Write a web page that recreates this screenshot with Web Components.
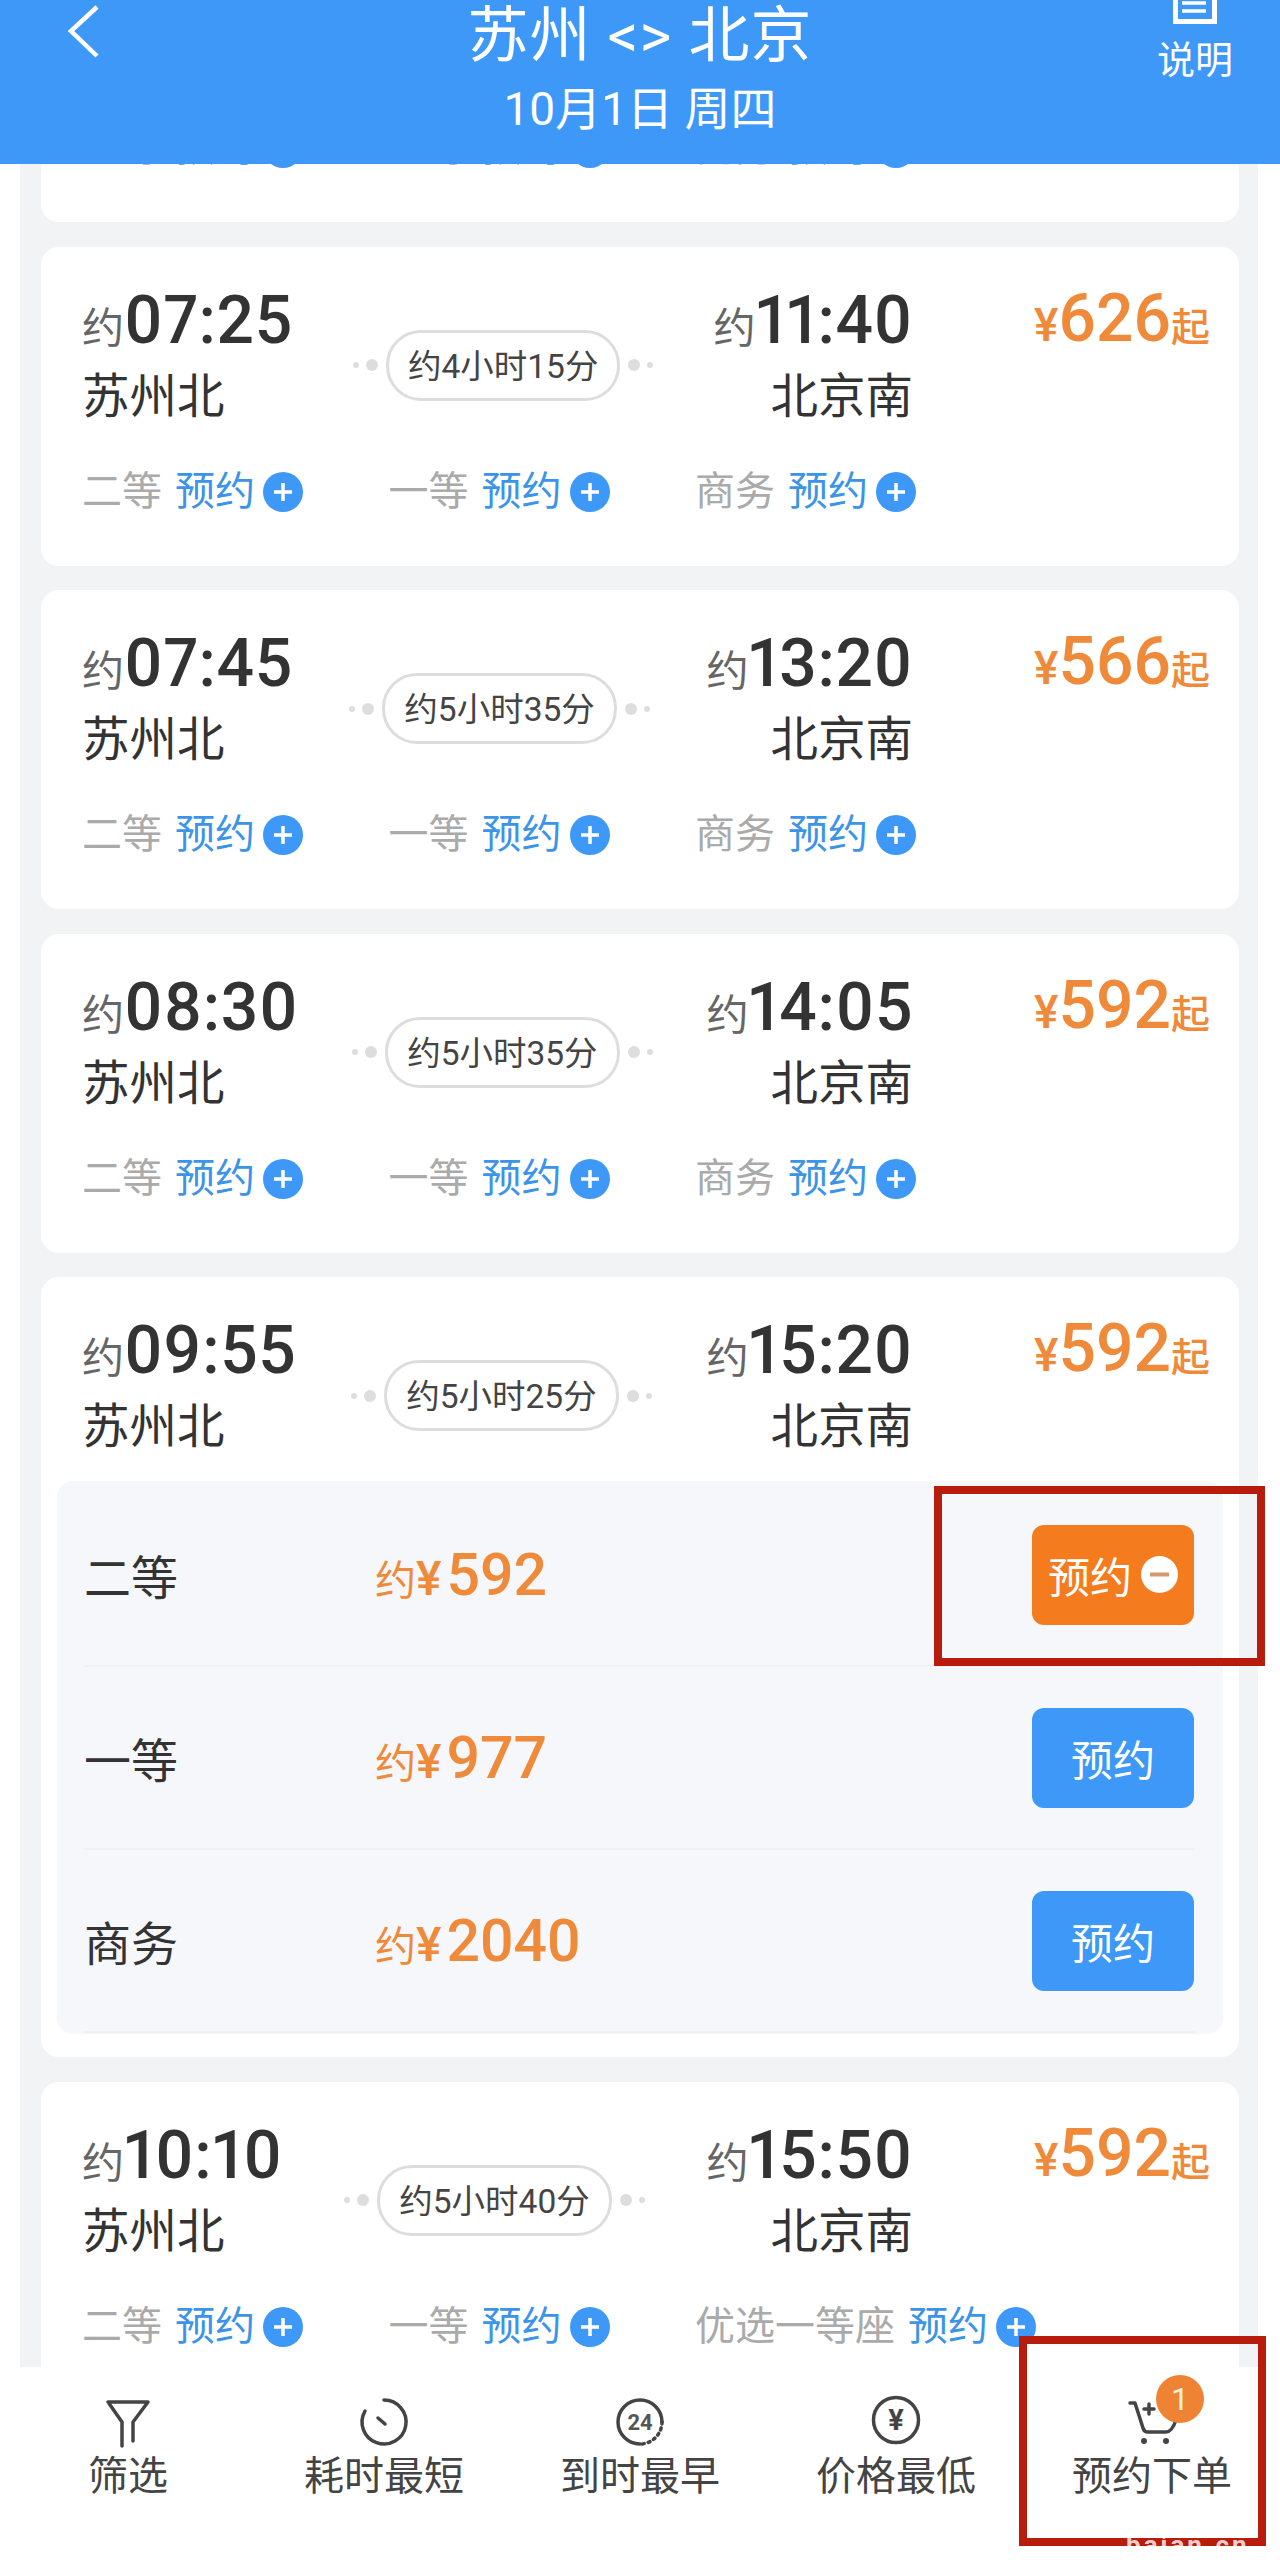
<!DOCTYPE html>
<html lang="zh-CN">
<head>
<meta charset="utf-8">
<title>苏州 北京</title>
<style>
  body { margin: 0; background: #fff; font-family: Roboto, "Noto Sans CJK SC", sans-serif; }
</style>
</head>
<body>
<ticket-page>
  <top-bar slot="top">
    苏州 &lt;&gt; 北京
    <span slot="sub">10月1日 周四</span>
    <span slot="side">说明</span>
  </top-bar>

  <train-card>
    <seat-list>
      <seat-tag>二等</seat-tag><seat-tag>一等</seat-tag><seat-tag>商务</seat-tag>
    </seat-list>
  </train-card>
  <train-card dep="07:25" arr="11:40" dur="4小时15分" price="626">
    <seat-list>
      <seat-tag>二等</seat-tag><seat-tag>一等</seat-tag><seat-tag>商务</seat-tag>
    </seat-list>
  </train-card>
  <train-card dep="07:45" arr="13:20" dur="5小时35分" price="566">
    <seat-list>
      <seat-tag>二等</seat-tag><seat-tag>一等</seat-tag><seat-tag>商务</seat-tag>
    </seat-list>
  </train-card>
  <train-card dep="08:30" arr="14:05" dur="5小时35分" price="592">
    <seat-list>
      <seat-tag>二等</seat-tag><seat-tag>一等</seat-tag><seat-tag>商务</seat-tag>
    </seat-list>
  </train-card>
  <train-card dep="09:55" arr="15:20" dur="5小时25分" price="592" open>
    <fare-panel>
      <fare-row price="592" picked>二等</fare-row>
      <fare-row price="977">一等</fare-row>
      <fare-row price="2040">商务</fare-row>
    </fare-panel>
  </train-card>
  <train-card dep="10:10" arr="15:50" dur="5小时40分" price="592">
    <seat-list>
      <seat-tag>二等</seat-tag><seat-tag>一等</seat-tag><seat-tag>优选一等座</seat-tag>
    </seat-list>
  </train-card>

  <bottom-tabs slot="bottom">
    <tab-item icon="funnel">筛选</tab-item>
    <tab-item icon="clock">耗时最短</tab-item>
    <tab-item icon="day">到时最早</tab-item>
    <tab-item icon="yen">价格最低</tab-item>
    <tab-item icon="cart" badge="1">预约下单</tab-item>
  </bottom-tabs>

  <mark-box slot="over" style="--x:934px;--y:1486px;--w:331px;--h:180px"></mark-box>
  <mark-box slot="over" style="--x:1019px;--y:2336px;--w:247px;--h:210px"></mark-box>
  <water-mark slot="over">baian.cn</water-mark>
</ticket-page>

<script>
// page shell: header, clipped list, footer
class TicketPage extends HTMLElement {
  constructor() {
    super();
    this.attachShadow({ mode: 'open' });
    this.shadowRoot.innerHTML = `
      <style>
        :host { display: flex; flex-direction: column; position: relative; width: 1280px; height: 2565px; overflow: hidden; background: #fff; color: #333; }
        .list { flex: 1; min-height: 0; overflow: hidden; margin: 0 22px 0 20px; padding: 0 19px 0 21px; background: #f2f3f5; }
        .inner { display: flex; flex-direction: column; gap: 24.5px; margin-top: -77px; }
      </style>
      <slot name="top"></slot>
      <div class="list"><div class="inner"><slot></slot></div></div>
      <slot name="bottom"></slot>
      <slot name="over"></slot>`;
  }
}

class TopBar extends HTMLElement {
  constructor() {
    super();
    this.attachShadow({ mode: 'open' });
    this.shadowRoot.innerHTML = `
      <style>
        :host { display: grid; grid-template-columns: 1fr auto 1fr; flex: none; position: relative; z-index: 2; height: 164px; background: #3d98f7; color: #fff; overflow: hidden; }
        .back { margin: 4px 0 0 66px; display: block; }
        .mid { text-align: center; }
        .title { font-size: 61px; line-height: 72px; letter-spacing: 1px; white-space: nowrap; }
        .sub { font-size: 46px; line-height: 72px; margin-top: 1px; white-space: nowrap; }
        .side { justify-self: end; width: 76px; margin-right: 47px; display: flex; flex-direction: column; align-items: center; font-size: 38px; line-height: 46px; white-space: nowrap; }
        .side svg { display: block; margin-bottom: 13px; }
      </style>
      <svg class="back" width="36" height="56" viewBox="0 0 36 56" fill="none" stroke="#fff" stroke-width="4.5">
        <path d="M31 3 L5 27 L31 52"/>
      </svg>
      <div class="mid">
        <div class="title"><slot></slot></div>
        <div class="sub"><slot name="sub"></slot></div>
      </div>
      <div class="side">
        <svg width="44" height="24" viewBox="0 0 44 24" fill="none" stroke="#fff" stroke-width="5">
          <rect x="2.5" y="-20" width="39" height="41.5"/>
          <path d="M9 3 H33 M9 11 H33" stroke-width="3.5"/>
        </svg>
        <slot name="side"></slot>
      </div>`;
  }
}

const cardTemplate = document.createElement('template');
cardTemplate.innerHTML = `
  <style>
    :host { display: block; flex: none; background: #fff; border-radius: 18px; padding-bottom: 54px; }
    :host([open]) { padding-bottom: 23px; }
    .head { display: flex; height: 148px; padding: 36px 29px 0 41px; color: #333; }
    .end { white-space: nowrap; }
    .end.right { text-align: right; }
    .time { font-size: 66px; line-height: 76px; font-weight: 500; letter-spacing: .6px; font-feature-settings: "pnum"; }
    .yue { font-size: 42px; font-weight: 400; color: #666; letter-spacing: 0; }
    .station { font-size: 47.5px; line-height: 60px; }
    .mid { flex: 1; display: flex; align-items: center; justify-content: center; gap: 8px; padding-top: 17px; }
    .dots { display: flex; align-items: center; gap: 7px; }
    .dots i { display: block; width: 12px; height: 12px; border-radius: 50%; background: #ddd; }
    .dots i.tiny { width: 6px; height: 6px; }
    .pill { box-sizing: border-box; height: 71px; padding: 0 19px 4px; display: flex; align-items: center; border: 3px solid #ddd; border-radius: 35px; font-size: 33.5px; color: #444; white-space: nowrap; background: #fff; }
    .price { width: 297px; margin-top: -2px; text-align: right; color: #ee8a3a; font-size: 66px; line-height: 76px; font-weight: 500; white-space: nowrap; }
    .price .cur { font-size: 46px; }
    .price .from { font-size: 39px; }
    .body { margin-top: 41px; }
    :host([open]) .body { margin-top: 20px; }
    .head[hidden] { display: none; }
  </style>
  <div class="head">
    <div class="end">
      <div class="time"><span class="yue">约</span><span class="dep"></span></div>
      <div class="station">苏州北</div>
    </div>
    <div class="mid">
      <div class="dots"><i class="tiny"></i><i></i></div>
      <div class="pill"></div>
      <div class="dots"><i></i><i class="tiny"></i></div>
    </div>
    <div class="end right">
      <div class="time"><span class="yue">约</span><span class="arr"></span></div>
      <div class="station">北京南</div>
    </div>
    <div class="price"><span class="cur">¥</span><span class="amount"></span><span class="from">起</span></div>
  </div>
  <div class="body"><slot></slot></div>`;

class TrainCard extends HTMLElement {
  constructor() {
    super();
    this.attachShadow({ mode: 'open' });
    this.shadowRoot.appendChild(cardTemplate.content.cloneNode(true));
  }
  connectedCallback() {
    const root = this.shadowRoot;
    if (!this.hasAttribute('dep')) {
      root.querySelector('.head').hidden = true;
      return;
    }
    root.querySelector('.dep').textContent = this.getAttribute('dep');
    root.querySelector('.arr').textContent = this.getAttribute('arr');
    root.querySelector('.pill').textContent = '约' + this.getAttribute('dur');
    root.querySelector('.amount').textContent = this.getAttribute('price');
  }
}

class SeatList extends HTMLElement {
  constructor() {
    super();
    this.attachShadow({ mode: 'open' });
    this.shadowRoot.innerHTML = `
      <style>
        :host { display: grid; grid-template-columns: 306.5px 306.5px 1fr; height: 40px; padding-left: 41px; }
      </style>
      <slot></slot>`;
  }
}

class SeatTag extends HTMLElement {
  constructor() {
    super();
    this.attachShadow({ mode: 'open' });
    this.shadowRoot.innerHTML = `
      <style>
        :host { display: flex; align-items: center; font-size: 40px; line-height: 40px; color: #aaa; white-space: nowrap; }
        .book { color: #3b94e8; margin: 0 8px 0 13px; }
        svg { display: block; flex: none; }
      </style>
      <slot></slot><span class="book">预约</span>
      <svg width="40" height="40" viewBox="0 0 40 40">
        <circle cx="20" cy="20" r="20" fill="#3d98f7"/>
        <path d="M20 11 V29 M11 20 H29" stroke="#fff" stroke-width="3.5"/>
      </svg>`;
  }
}

class FarePanel extends HTMLElement {
  constructor() {
    super();
    this.attachShadow({ mode: 'open' });
    this.shadowRoot.innerHTML = `
      <style>
        :host { display: block; margin: 0 16px; padding: 3px 28px 1px 27px; border-radius: 16px; background: #f6f7fb; }
      </style>
      <slot></slot>`;
  }
}

class FareRow extends HTMLElement {
  constructor() {
    super();
    this.attachShadow({ mode: 'open' });
    this.shadowRoot.innerHTML = `
      <style>
        :host { display: flex; align-items: center; box-sizing: border-box; height: 183px; border-bottom: 2px solid #eff0f4; }
        .name { width: 291px; font-size: 47px; color: #333; }
        .fare { flex: 1; color: #ee8a3a; font-size: 59px; font-weight: 500; white-space: nowrap; }
        .fare .yue { font-size: 41px; font-weight: 400; }
        .fare .cur { font-size: 48px; margin-right: 5px; }
        .btn { box-sizing: border-box; width: 162px; height: 100px; border-radius: 12px; background: #3d98f7; color: #fff; font-size: 42px; display: flex; align-items: center; justify-content: center; gap: 9px; margin-right: 1px; }
        :host([picked]) .btn { background: #f47c1e; }
        svg { display: none; flex: none; }
        :host([picked]) svg { display: block; }
      </style>
      <div class="name"><slot></slot></div>
      <div class="fare"><span class="yue">约</span><span class="cur">¥</span><span class="amount"></span></div>
      <div class="btn"><span>预约</span>
        <svg width="37" height="37" viewBox="0 0 37 37">
          <circle cx="18.5" cy="18.5" r="18.5" fill="#fff"/>
          <path d="M9 18.5 H28" stroke="#d29a6c" stroke-width="4"/>
        </svg>
      </div>`;
  }
  connectedCallback() {
    this.shadowRoot.querySelector('.amount').textContent = this.getAttribute('price');
  }
}

class BottomTabs extends HTMLElement {
  constructor() {
    super();
    this.attachShadow({ mode: 'open' });
    this.shadowRoot.innerHTML = `
      <style>
        :host { display: grid; grid-template-columns: repeat(5, 256px); flex: none; height: 198px; background: #fff; position: relative; z-index: 2; }
      </style>
      <slot></slot>`;
  }
}

const tabIcons = {
  funnel: '<path d="M10 10 H50 L35 30 V49 M10 10 L24 30 V54"/>',
  clock: '<path d="M30 8 A22 22 0 1 1 11 19"/><path d="M24 26 L31 32"/>',
  day: '<path d="M30 52 A22 22 0 1 1 52 30"/><path d="M52 30 A22 22 0 0 1 30 52" stroke-dasharray="2 4"/>' +
       '<text x="30" y="38" text-anchor="middle" font-size="22" font-weight="700" fill="#555" stroke="none" font-family="Roboto, sans-serif">24</text>',
  yen: '<circle cx="30" cy="28" r="22.5"/>' +
       '<text x="30" y="38" text-anchor="middle" font-size="29" font-weight="700" fill="#444" stroke="none" font-family="Roboto, sans-serif">¥</text>',
  cart: '<path d="M8 11 H13 L21 36 Q22 40 26 40 H44 Q50 40 54 28"/><path d="M27 12 V22 M22 17 H32"/>' +
        '<circle cx="22" cy="49" r="3" fill="#444" stroke="none"/><circle cx="44" cy="49" r="3" fill="#444" stroke="none"/>'
};

class TabItem extends HTMLElement {
  constructor() {
    super();
    this.attachShadow({ mode: 'open' });
    this.shadowRoot.innerHTML = `
      <style>
        :host { display: flex; flex-direction: column; align-items: center; padding-top: 25px; font-size: 40px; line-height: 50px; color: #444; white-space: nowrap; }
        .ico { position: relative; width: 60px; height: 60px; }
        svg { display: block; }
        .badge { position: absolute; left: 34px; top: -17px; width: 48px; height: 48px; border-radius: 50%; background: #ee8433; color: #fff1dc; font-size: 32px; line-height: 48px; text-align: center; }
        .badge:empty { display: none; }
      </style>
      <div class="ico">
        <svg width="60" height="60" viewBox="0 0 60 60" fill="none" stroke="#444" stroke-width="3.5" stroke-linejoin="round" stroke-linecap="round"></svg>
        <div class="badge"></div>
      </div>
      <slot></slot>`;
  }
  connectedCallback() {
    this.shadowRoot.querySelector('svg').innerHTML = tabIcons[this.getAttribute('icon')];
    this.shadowRoot.querySelector('.badge').textContent = this.getAttribute('badge') || '';
  }
}

// red annotation boxes drawn over the shot
class MarkBox extends HTMLElement {
  constructor() {
    super();
    this.attachShadow({ mode: 'open' });
    this.shadowRoot.innerHTML = `
      <style>
        :host { display: block; position: absolute; z-index: 3; box-sizing: border-box; left: var(--x); top: var(--y); width: var(--w); height: var(--h); border: 8px solid #b81c0c; }
      </style>`;
  }
}

// site stamp: white, so it only shows where it crosses the red box
class WaterMark extends HTMLElement {
  constructor() {
    super();
    this.attachShadow({ mode: 'open' });
    this.shadowRoot.innerHTML = `
      <style>
        :host { display: block; position: absolute; z-index: 4; left: 1126px; top: 2530px; font-size: 26px; line-height: 30px; font-weight: 700; letter-spacing: 3px; color: rgba(255,255,255,.8); white-space: nowrap; }
      </style>
      <slot></slot>`;
  }
}

customElements.define('ticket-page', TicketPage);
customElements.define('top-bar', TopBar);
customElements.define('train-card', TrainCard);
customElements.define('seat-list', SeatList);
customElements.define('seat-tag', SeatTag);
customElements.define('fare-panel', FarePanel);
customElements.define('fare-row', FareRow);
customElements.define('bottom-tabs', BottomTabs);
customElements.define('tab-item', TabItem);
customElements.define('mark-box', MarkBox);
customElements.define('water-mark', WaterMark);
</script>
</body>
</html>
